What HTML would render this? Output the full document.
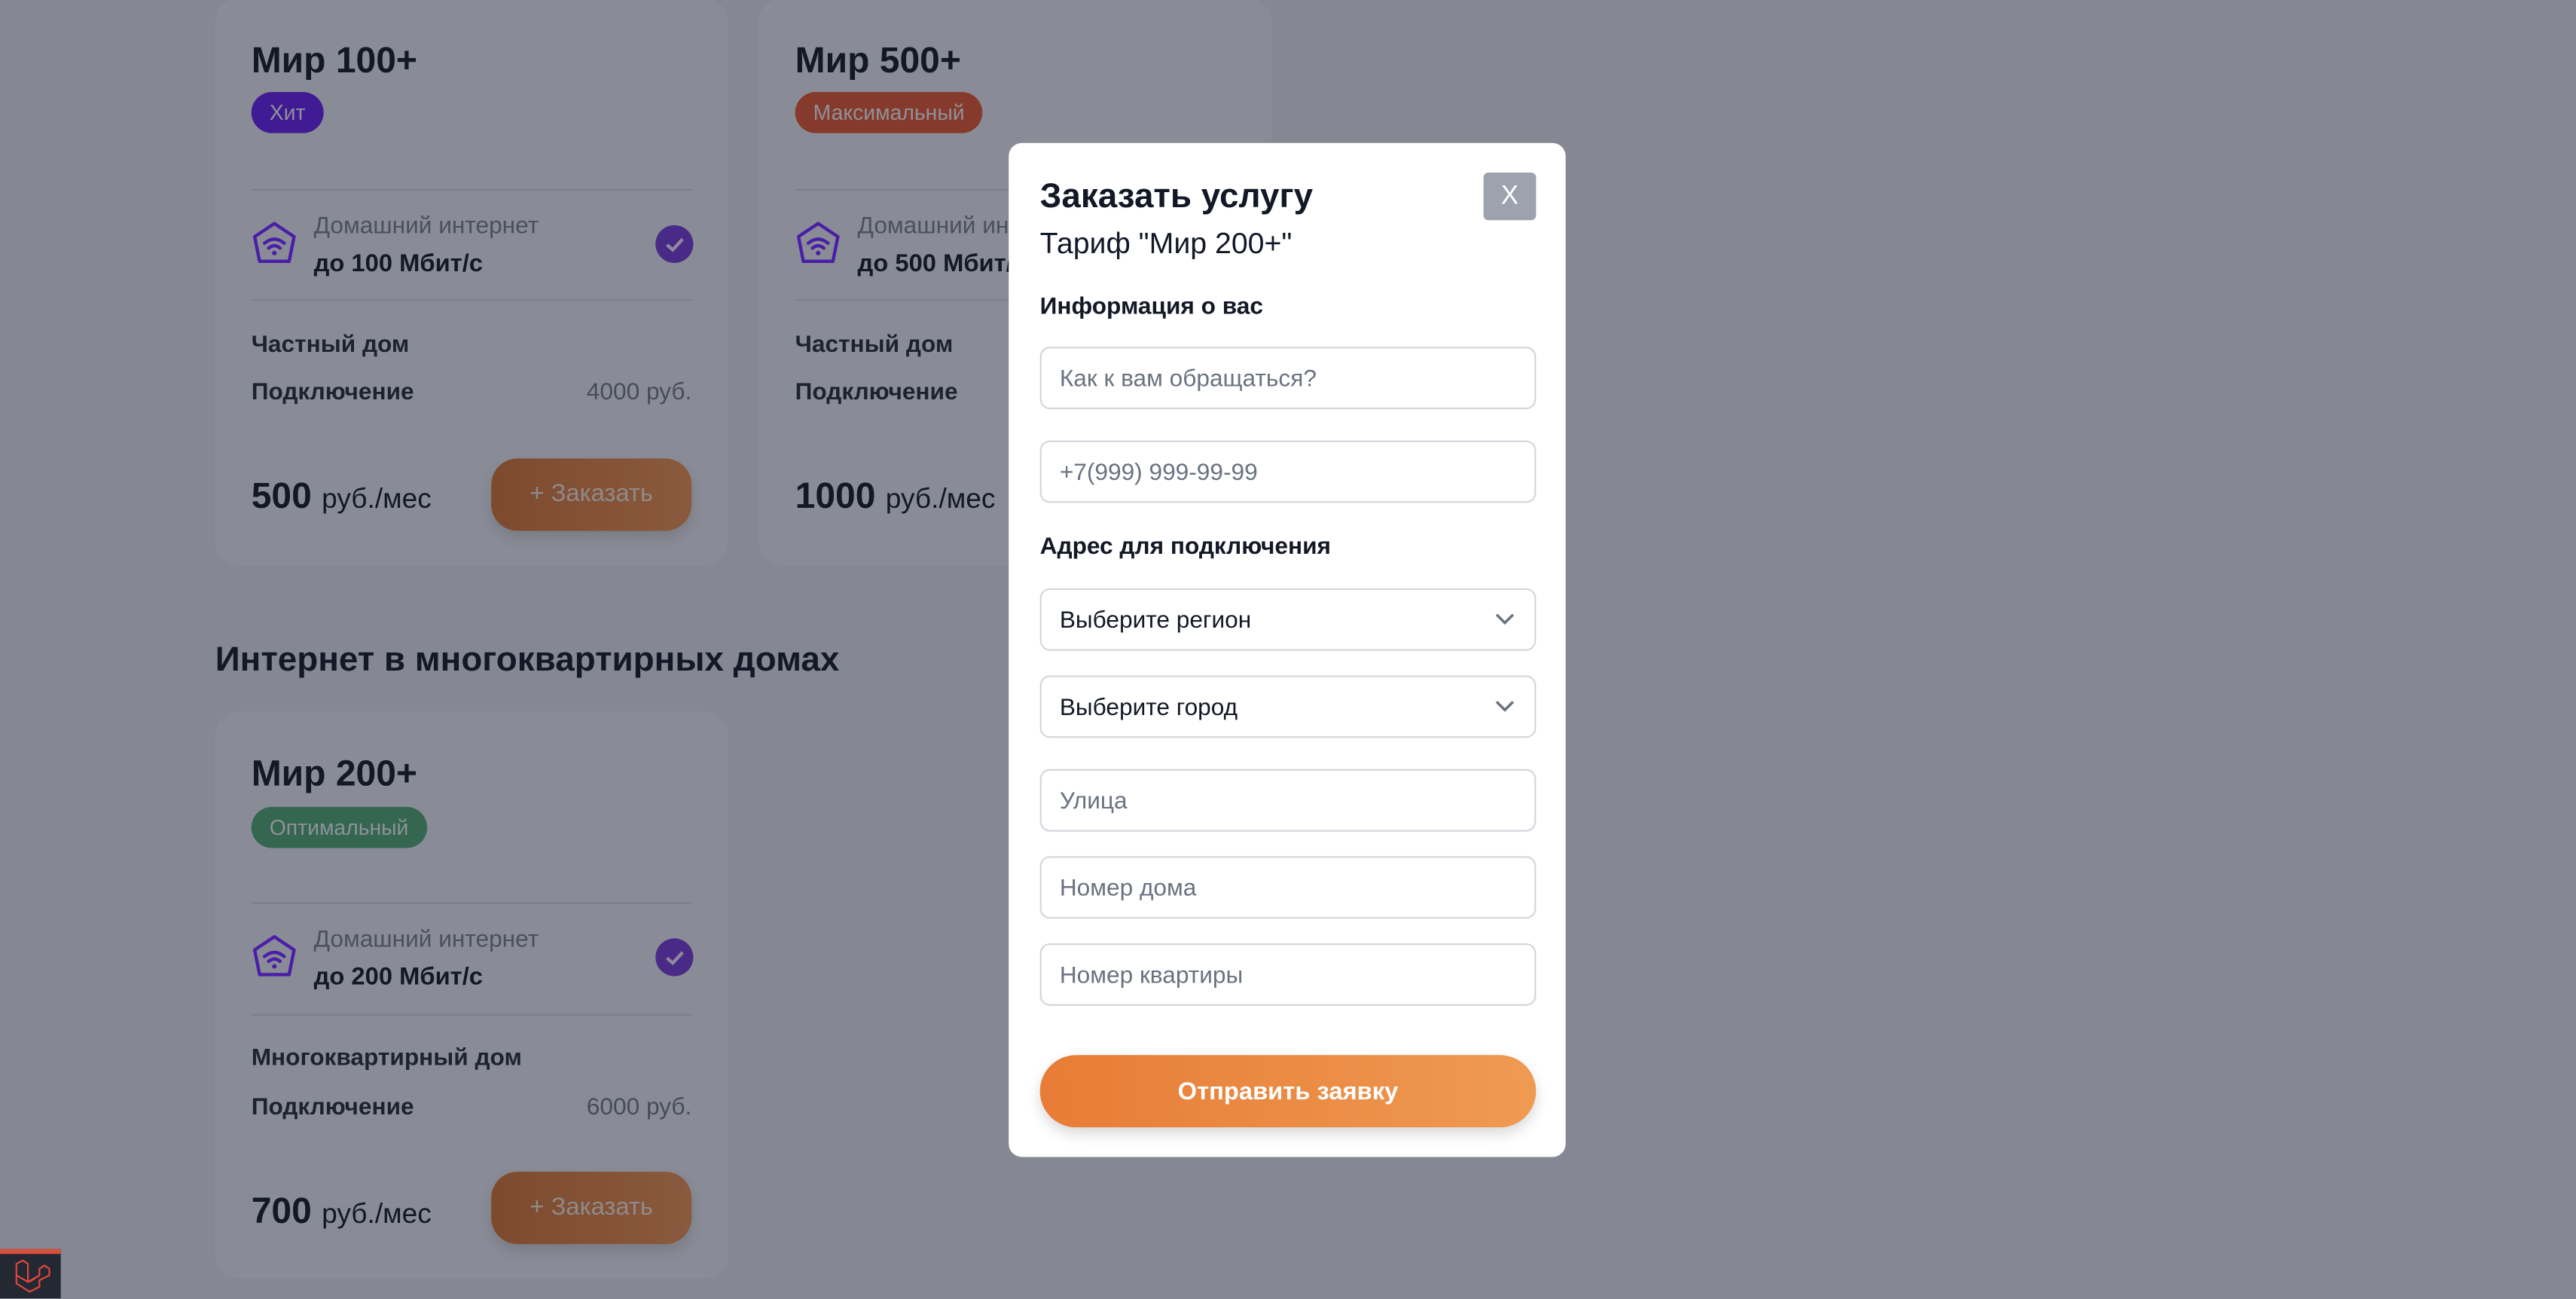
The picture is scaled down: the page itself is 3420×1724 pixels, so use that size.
<!DOCTYPE html>
<html><head><meta charset="utf-8"><style>
*{box-sizing:border-box;margin:0;padding:0}
html,body{width:3420px;height:1724px;overflow:hidden;background:#858892}
#w{position:absolute;left:0;top:0;width:1568px;height:790px;transform:scale(2.18112);transform-origin:0 0;font-family:"Liberation Sans",sans-serif;color:#121826}
.card{position:absolute;width:312px;height:345px;background:#898c96;border-radius:14px}
.t{position:absolute;left:22px;top:22px;font-size:22px;font-weight:bold}
.b{position:absolute;left:22px;top:57px;height:25px;border-radius:13px;color:#8e919a;font-size:13px;line-height:26px;padding:0 11px}
.hr{position:absolute;left:22px;right:22px;height:1px;background:#7b7f89}
.ic{position:absolute;left:22px;top:135px}
.l1{position:absolute;left:60px;top:131px;font-size:14.5px;color:#4b505c}
.l2{position:absolute;left:60px;top:153px;font-size:15px;font-weight:bold}
.ck{position:absolute;left:268px;top:138px;width:23px;height:23px;border-radius:50%;background:#4a2a87}
.r{position:absolute;left:22px;font-size:14.5px;font-weight:bold;color:#1c2230}
.rv{position:absolute;right:22px;font-size:14.5px;color:#474c58}
.p{position:absolute;left:22px;top:287px;font-size:22px;font-weight:bold}
.p span{font-size:17px;font-weight:normal}
.btn{position:absolute;left:168px;top:279px;width:122px;height:44px;border-radius:16px;background:linear-gradient(90deg,#7d4a2e,#8a5a3e);color:#8f8a8a;font-size:15px;text-align:center;line-height:44px;box-shadow:0 4px 8px rgba(0,0,0,.12)}
.m{position:absolute;left:614px;top:87px;width:339px;height:617px;background:#fff;border-radius:8px}
.in{position:absolute;left:19px;width:302px;height:38px;border:1.5px solid #d4d6dc;border-radius:6px;font-size:14.5px;color:#6b7280;line-height:38px;padding-left:11px}
.sel{color:#121826}
.sel svg{position:absolute;right:12px;top:14px}
.h{position:absolute;left:19px;font-size:14.5px;font-weight:bold}
</style></head><body><div id="w">

<div class="card" style="left:131px;top:-1px">
<div class="t" style="top:25px">Мир 100+</div>
<div class="b" style="background:#411b93">Хит</div>
<div class="hr" style="top:116px"></div>
<svg class="ic" width="28" height="28" viewBox="0 0 28 28"><path d="M14 2 L26 10 L23 25 H5 L2 10 Z" fill="none" stroke="#4a1ea8" stroke-width="2" stroke-linejoin="round"/><path d="M8 14 Q14 9 20 14 M10.5 17 Q14 14 17.5 17" fill="none" stroke="#4a1ea8" stroke-width="2" stroke-linecap="round"/><circle cx="14" cy="20" r="1.4" fill="#4a1ea8"/></svg>
<div class="l1">Домашний интернет</div><div class="l2">до 100 Мбит/с</div>
<div class="ck"><svg width="23" height="23"><path d="M7 12 L10.5 15 L16.5 8.5" fill="none" stroke="#8e8a9c" stroke-width="2"/></svg></div>
<div class="hr" style="top:183px"></div>
<div class="r" style="top:203px">Частный дом</div>
<div class="r" style="top:232px">Подключение</div><div class="rv" style="top:232px">4000 руб.</div>
<div class="p" style="top:290px">500 <span>руб./мес</span></div>
<div class="btn" style="top:280px">+ Заказать</div>
</div>

<div class="card" style="left:462px;top:-1px">
<div class="t" style="top:25px">Мир 500+</div>
<div class="b" style="background:#863a2b">Максимальный</div>
<div class="hr" style="top:116px"></div>
<svg class="ic" width="28" height="28" viewBox="0 0 28 28"><path d="M14 2 L26 10 L23 25 H5 L2 10 Z" fill="none" stroke="#4a1ea8" stroke-width="2" stroke-linejoin="round"/><path d="M8 14 Q14 9 20 14 M10.5 17 Q14 14 17.5 17" fill="none" stroke="#4a1ea8" stroke-width="2" stroke-linecap="round"/><circle cx="14" cy="20" r="1.4" fill="#4a1ea8"/></svg>
<div class="l1">Домашний интернет</div><div class="l2">до 500 Мбит/с</div>
<div class="hr" style="top:183px"></div>
<div class="r" style="top:203px">Частный дом</div>
<div class="r" style="top:232px">Подключение</div>
<div class="p" style="top:290px">1000 <span>руб./мес</span></div>
</div>

<div style="position:absolute;left:131px;top:390px;font-size:21px;font-weight:bold">Интернет в многоквартирных домах</div>

<div class="card" style="left:131px;top:433px">
<div class="t" style="top:25px">Мир 200+</div>
<div class="b" style="top:58px;background:#346650">Оптимальный</div>
<div class="hr" style="top:116px"></div>
<svg class="ic" width="28" height="28" viewBox="0 0 28 28"><path d="M14 2 L26 10 L23 25 H5 L2 10 Z" fill="none" stroke="#4a1ea8" stroke-width="2" stroke-linejoin="round"/><path d="M8 14 Q14 9 20 14 M10.5 17 Q14 14 17.5 17" fill="none" stroke="#4a1ea8" stroke-width="2" stroke-linecap="round"/><circle cx="14" cy="20" r="1.4" fill="#4a1ea8"/></svg>
<div class="l1">Домашний интернет</div><div class="l2">до 200 Мбит/с</div>
<div class="ck"><svg width="23" height="23"><path d="M7 12 L10.5 15 L16.5 8.5" fill="none" stroke="#8e8a9c" stroke-width="2"/></svg></div>
<div class="hr" style="top:184px"></div>
<div class="r" style="top:203px">Многоквартирный дом</div>
<div class="r" style="top:233px">Подключение</div><div class="rv" style="top:233px">6000 руб.</div>
<div class="p" style="top:291px">700 <span>руб./мес</span></div>
<div class="btn" style="top:280px">+ Заказать</div>
</div>

<div class="m">
<div style="position:absolute;left:19px;top:21px;font-size:21px;font-weight:bold">Заказать услугу</div>
<div style="position:absolute;left:19px;top:51px;font-size:18px">Тариф "Мир 200+"</div>
<div style="position:absolute;left:289px;top:18px;width:32px;height:29px;background:#9ca3af;border-radius:3px;color:#fff;font-size:16px;text-align:center;line-height:30px">X</div>
<div class="h" style="top:92px">Информация о вас</div>
<div class="in" style="top:124px">Как к вам обращаться?</div>
<div class="in" style="top:181px">+7(999) 999-99-99</div>
<div class="h" style="top:238px">Адрес для подключения</div>
<div class="in sel" style="top:271px">Выберите регион<svg width="12" height="8"><path d="M1 1 L6 6 L11 1" fill="none" stroke="#6b7280" stroke-width="1.6"/></svg></div>
<div class="in sel" style="top:324px">Выберите город<svg width="12" height="8"><path d="M1 1 L6 6 L11 1" fill="none" stroke="#6b7280" stroke-width="1.6"/></svg></div>
<div class="in" style="top:381px">Улица</div>
<div class="in" style="top:434px">Номер дома</div>
<div class="in" style="top:487px">Номер квартиры</div>
<div style="position:absolute;left:19px;top:555px;width:302px;height:44px;border-radius:22px;background:linear-gradient(90deg,#e77c36,#ef9a52);color:#fff;font-size:15px;font-weight:bold;text-align:center;line-height:46px;box-shadow:0 4px 8px rgba(0,0,0,.15)">Отправить заявку</div>
</div>

<div style="position:absolute;left:0;top:760px;width:37px;height:30px;background:#242833;border-top:3px solid #d9503c">
<svg width="24" height="22" viewBox="0 0 24 22" style="position:absolute;left:7px;top:3px"><path d="M3 3 L7 1 L10 3 V14 L17 10 V6 L20 4 L23 6 V10 L17 13 V17 L11 20 L3 15 Z M10 14 L3 10 M17 10 L11 14" fill="none" stroke="#e0483a" stroke-width="1"/></svg>
</div>

</div></body></html>
